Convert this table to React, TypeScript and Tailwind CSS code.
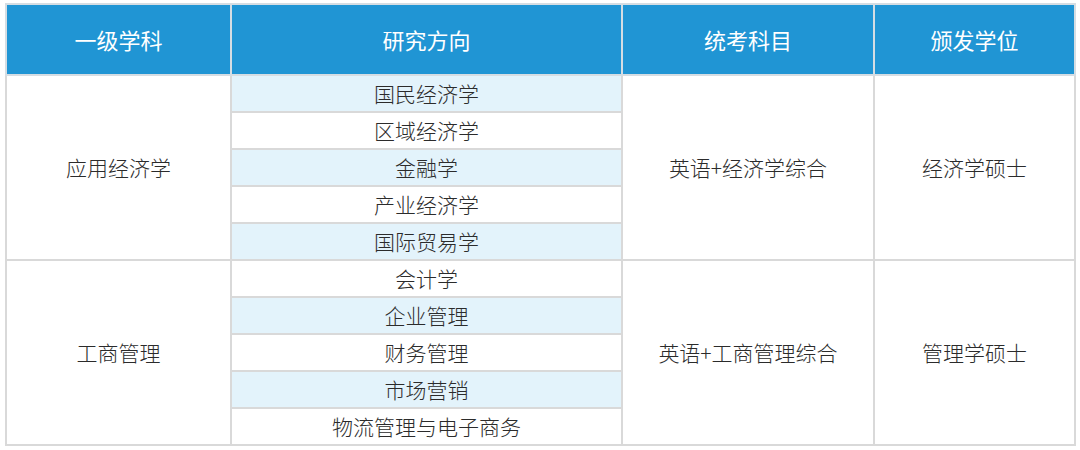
import React from "react";

const GROUPS = [
    {
        subject: "应用经济学",
        exam: "英语+经济学综合",
        degree: "经济学硕士",
        directions: ["国民经济学", "区域经济学", "金融学", "产业经济学", "国际贸易学"],
        startBlue: true,
    },
    {
        subject: "工商管理",
        exam: "英语+工商管理综合",
        degree: "管理学硕士",
        directions: ["会计学", "企业管理", "财务管理", "市场营销", "物流管理与电子商务"],
        startBlue: false,
    },
];

const HEADERS = ["一级学科", "研究方向", "统考科目", "颁发学位"];

export default function App() {
    return (
        <div
            className="w-[1080px] h-[450px] bg-white pt-[3px] pl-[5px]"
            style={{ fontFamily: '"Noto Sans CJK SC", "Noto Sans", sans-serif' }}
        >
            <table className="w-[1069px] border-collapse table-fixed text-[21px] text-[#2b2b2b] font-light">
                <colgroup>
                    <col className="w-[225px]" />
                    <col className="w-[391px]" />
                    <col className="w-[252px]" />
                    <col className="w-[201px]" />
                </colgroup>
                <thead>
                    <tr className="h-[71px] bg-[#2095d4]">
                        {HEADERS.map((h) => (
                            <th
                                key={h}
                                className="border-2 border-[#d5dde3] text-white text-[22px] font-normal text-center"
                            >
                                {h}
                            </th>
                        ))}
                    </tr>
                </thead>
                <tbody>
                    {GROUPS.map((g) =>
                        g.directions.map((d, i) => {
                            const blue = g.startBlue ? i % 2 === 0 : i % 2 === 1;
                            return (
                                <tr key={d} className="h-[37px]">
                                    {i === 0 && (
                                        <td rowSpan={5} className="border-2 border-[#d9d9d9] text-center">
                                            {g.subject}
                                        </td>
                                    )}
                                    <td
                                        className={`border-2 border-[#d9d9d9] text-center leading-none ${blue ? "bg-[#e3f3fb]" : "bg-white"}`}
                                    >
                                        {d}
                                    </td>
                                    {i === 0 && (
                                        <>
                                            <td rowSpan={5} className="border-2 border-[#d9d9d9] text-center">
                                                {g.exam}
                                            </td>
                                            <td rowSpan={5} className="border-2 border-[#d9d9d9] text-center">
                                                {g.degree}
                                            </td>
                                        </>
                                    )}
                                </tr>
                            );
                        })
                    )}
                </tbody>
            </table>
        </div>
    );
}
